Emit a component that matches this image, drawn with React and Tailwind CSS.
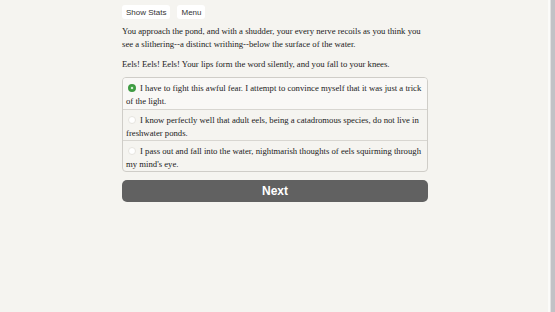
const CHOICES = [
  'I have to fight this awful fear. I attempt to convince myself that it was just a trick of the light.',
  'I know perfectly well that adult eels, being a catadromous species, do not live in freshwater ponds.',
  "I pass out and fall into the water, nightmarish thoughts of eels squirming through my mind's eye.",
];

export default function App() {
  return (
    <div className="h-[312px] w-[555px] flex overflow-hidden bg-[#f5f4f0]">
      <div className="flex-1 flex justify-center">
        <div className="w-[306px] ml-[5px] pt-[5px] font-['Liberation_Serif',serif] text-[8.7px] leading-[13px] text-[#222]">
          <div className="flex gap-[7px] font-['Liberation_Sans',sans-serif] text-[8px]">
            <span className="bg-white rounded-[3px] px-[4px] h-[14px] flex items-center text-[#333]">Show Stats</span>
            <span className="bg-white rounded-[3px] px-[4px] h-[14px] flex items-center text-[#333]">Menu</span>
          </div>
          <p className="mt-[6px]">
            You approach the pond, and with a shudder, your every nerve recoils as you think you see a slithering--a distinct writhing--below the surface of the water.
          </p>
          <p className="mt-[7px]">
            Eels! Eels! Eels! Your lips form the word silently, and you fall to your knees.
          </p>
          <div className="mt-[6px] border border-[#cfcdc8] rounded-[4px] overflow-hidden">
            {CHOICES.map((c, i) => (
              <div
                key={i}
                className={`px-[3px] pt-[4px] pb-[3px] h-[31px] ${i ? 'border-t border-[#d8d6d1]' : 'bg-[#f9f8f6]'}`}
              >
                {i === 0 ? (
                  <span className="inline-block align-[-1px] w-[8px] h-[8px] rounded-full bg-[#4caf50] border-[2px] border-[#3f9a43] mx-[2px] mr-[4px] relative">
                    <span className="absolute left-[1px] top-[1px] w-[2px] h-[2px] rounded-full bg-white" />
                  </span>
                ) : (
                  <span className="inline-block align-[-1px] w-[8px] h-[8px] rounded-full bg-white border border-[#e6e4df] mx-[2px] mr-[4px]" />
                )}
                {c}
              </div>
            ))}
          </div>
          <button className="mt-[8px] w-full h-[22px] rounded-[5px] bg-[#616161] text-white font-bold font-['Liberation_Sans',sans-serif] text-[12px] flex items-center justify-center">
            Next
          </button>
        </div>
      </div>
      <div className="w-[10px] flex">
        <div className="w-[3px] bg-[#f5f4f0]" />
        <div className="w-[2px] bg-[#fbfbf9]" />
        <div className="w-[1px] bg-[#e2e2e2]" />
        <div className="flex-1 bg-[#c2c2c6]" />
      </div>
    </div>
  );
}
